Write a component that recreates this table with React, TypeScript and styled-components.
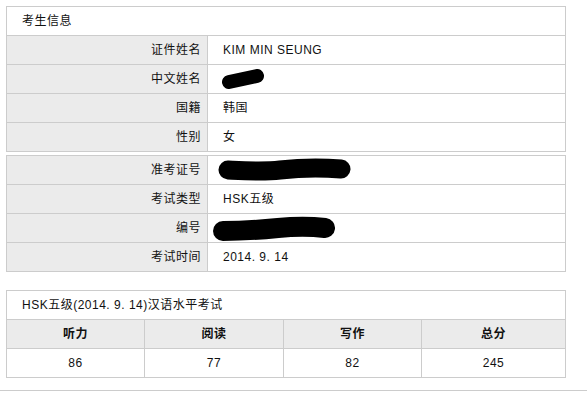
import React from 'react';
import styled, { createGlobalStyle } from 'styled-components';

const GlobalStyle = createGlobalStyle`
  html, body {
    margin: 0;
    padding: 0;
    background: #ffffff;
  }
  body {
    font-family: 'Liberation Sans', 'Noto Sans CJK SC', sans-serif;
    font-size: 12px;
    color: #111111;
  }
`;

const colors = {
  border: '#cccccc',
  label: '#ebebeb',
  text: '#111111',
};

type Blob = { width: number; height: number; shift: number; d: string; stroke: number };

const blobs: Record<string, Blob> = {
  chineseName: { width: 46, height: 20, shift: -3, d: 'M9 13 C 18 11, 28 9, 37 7', stroke: 14 },
  ticket: { width: 133, height: 24, shift: -5, d: 'M10 12 C 30 13, 45 14, 62 12 S 100 9, 123 11', stroke: 19 },
  serial: { width: 122, height: 26, shift: -10, d: 'M10 16 C 30 16, 45 15, 65 13 S 95 11, 112 13', stroke: 20 },
};

const App = () => {
  return (
    <>
      <GlobalStyle />
      <Page>
        <InfoTable>
          <InfoCols />
          <tbody>
            <tr>
              <TitleCell colSpan={2}>考生信息</TitleCell>
            </tr>
            <InfoRow label="证件姓名">KIM MIN SEUNG</InfoRow>
            <InfoRow label="中文姓名">
              <Redaction blob={blobs.chineseName} />
            </InfoRow>
            <InfoRow label="国籍">韩国</InfoRow>
            <InfoRow label="性别">女</InfoRow>
          </tbody>
        </InfoTable>

        <InfoTable $gap={3}>
          <InfoCols />
          <tbody>
            <InfoRow label="准考证号">
              <Redaction blob={blobs.ticket} />
            </InfoRow>
            <InfoRow label="考试类型">HSK五级</InfoRow>
            <InfoRow label="编号">
              <Redaction blob={blobs.serial} />
            </InfoRow>
            <InfoRow label="考试时间">2014. 9. 14</InfoRow>
          </tbody>
        </InfoTable>

        <InfoTable $gap={18}>
          <colgroup>
            <col style={{ width: 138 }} />
            <col style={{ width: 139 }} />
            <col style={{ width: 138 }} />
            <col />
          </colgroup>
          <tbody>
            <tr>
              <TitleCell colSpan={4}>HSK五级(2014. 9. 14)汉语水平考试</TitleCell>
            </tr>
            <tr>
              <ScoreHead>听力</ScoreHead>
              <ScoreHead>阅读</ScoreHead>
              <ScoreHead>写作</ScoreHead>
              <ScoreHead>总分</ScoreHead>
            </tr>
            <tr>
              <ScoreCell>86</ScoreCell>
              <ScoreCell>77</ScoreCell>
              <ScoreCell>82</ScoreCell>
              <ScoreCell>245</ScoreCell>
            </tr>
          </tbody>
        </InfoTable>
      </Page>
      <Divider />
    </>
  );
};

const InfoCols = () => (
  <colgroup>
    <col style={{ width: 201 }} />
    <col />
  </colgroup>
);

const InfoRow = ({ label, children }: { label: string; children: React.ReactNode }) => (
  <tr>
    <LabelCell>{label}</LabelCell>
    <ValueCell>{children}</ValueCell>
  </tr>
);

const Redaction = ({ blob }: { blob: Blob }) => (
  <BlobSvg
    $shift={blob.shift}
    width={blob.width}
    height={blob.height}
    viewBox={`0 0 ${blob.width} ${blob.height}`}
  >
    <path
      d={blob.d}
      fill="none"
      stroke="#000"
      strokeWidth={blob.stroke}
      strokeLinecap="round"
      strokeLinejoin="round"
    />
  </BlobSvg>
);

const Page = styled.div`
  padding: 6px 0 0 6px;
`;

const InfoTable = styled.table<{ $gap?: number }>`
  width: 560px;
  margin-top: ${(p) => p.$gap ?? 0}px;
  border-collapse: collapse;
  table-layout: fixed;
  border: 1px solid ${colors.border};
`;

const Cell = styled.td`
  height: 28px;
  padding: 0;
  border: 1px solid ${colors.border};
  line-height: 14px;
  letter-spacing: 0.5px;
  vertical-align: middle;
  white-space: nowrap;
`;

const TitleCell = styled(Cell)`
  padding-left: 15px;
  background: #ffffff;
`;

const LabelCell = styled(Cell)`
  padding-right: 6px;
  text-align: right;
  background: ${colors.label};
`;

const ValueCell = styled(Cell)`
  padding-left: 15px;
`;

const BlobSvg = styled.svg<{ $shift: number }>`
  display: block;
  margin-left: ${(p) => p.$shift}px;
`;

const ScoreHead = styled(Cell)`
  text-align: center;
  font-weight: bold;
  background: ${colors.label};
`;

const ScoreCell = styled(Cell)`
  text-align: center;
`;

const Divider = styled.div`
  margin-top: 12px;
  border-top: 1px solid ${colors.border};
`;

export default App;
